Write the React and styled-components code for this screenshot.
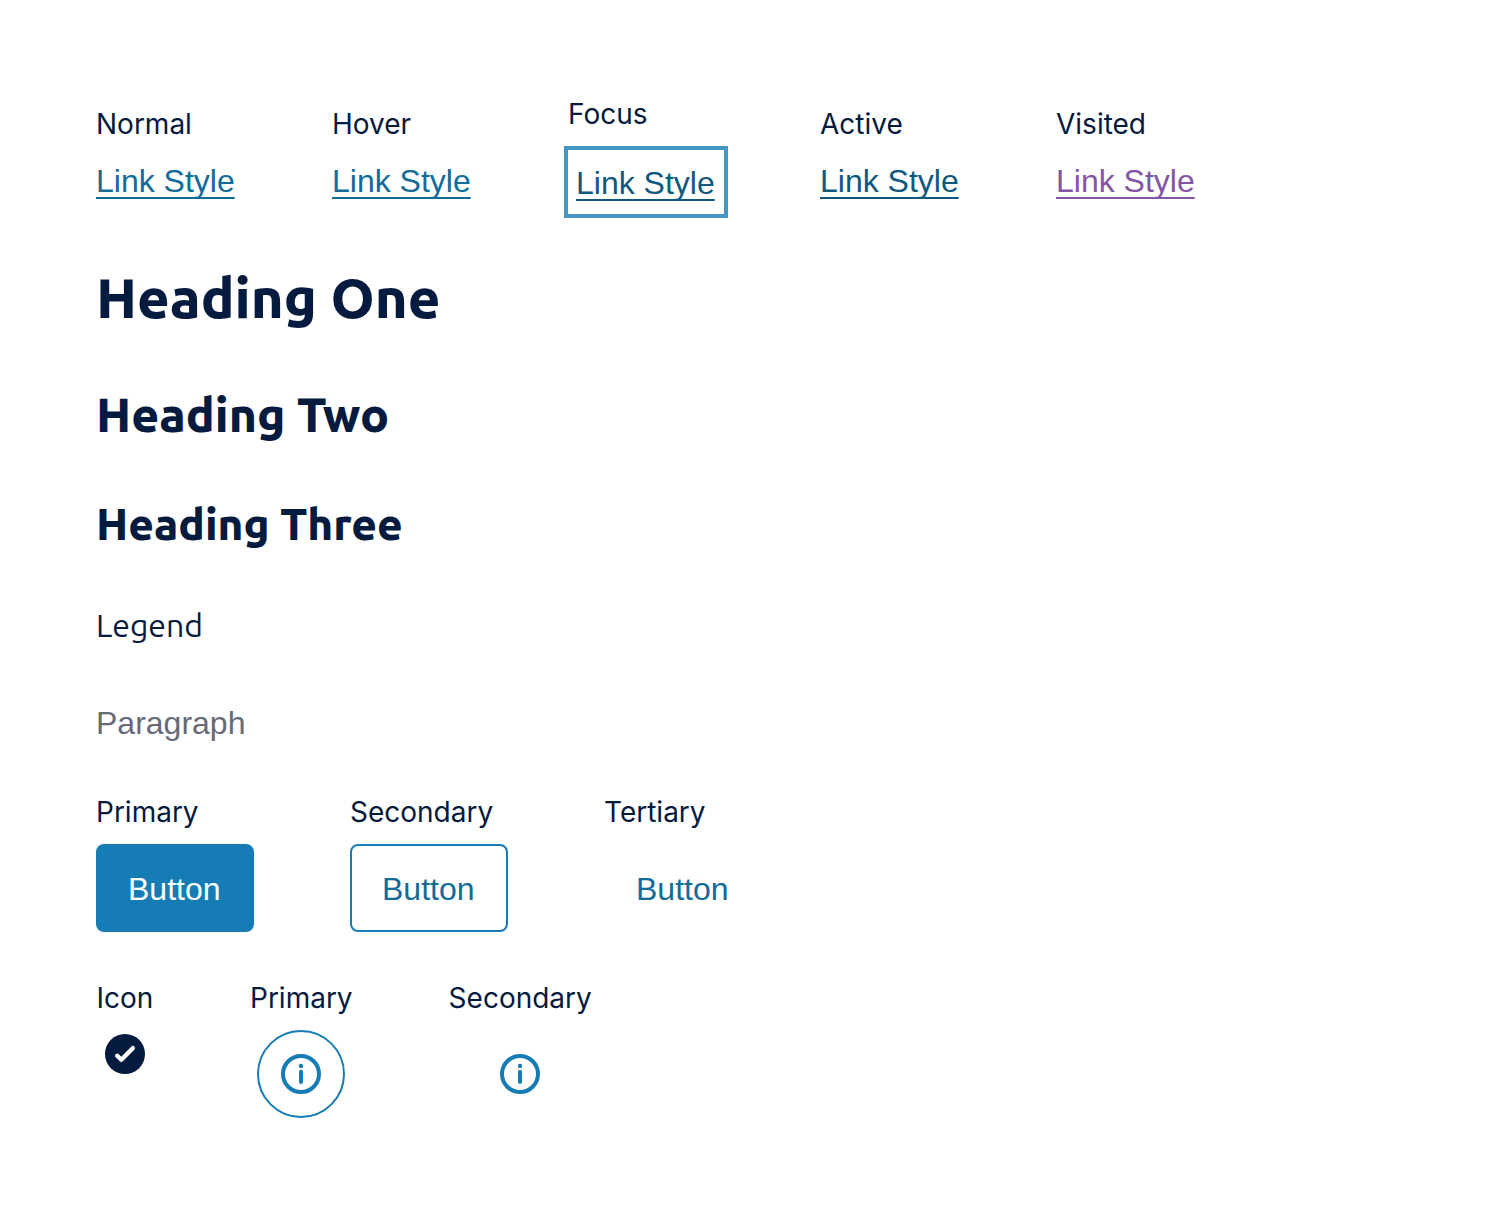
import React from 'react';
import styled, { createGlobalStyle, css } from 'styled-components';

const NAVY = '#041a3e';
const BLUE = '#157cb5';
const LINK_BLUE = '#126b98';

const LINKS = [
  { label: 'Normal', color: LINK_BLUE },
  { label: 'Hover', color: LINK_BLUE },
  { label: 'Focus', color: '#0e587e', focused: true },
  { label: 'Active', color: '#0e587e' },
  { label: 'Visited', color: '#8355a5' },
];

const BUTTONS = [
  { label: 'Primary', variant: 'primary' },
  { label: 'Secondary', variant: 'secondary' },
  { label: 'Tertiary', variant: 'tertiary' },
];

const CheckIcon = () => (
  <svg width="40" height="40" viewBox="0 0 40 40" aria-hidden="true">
    <circle cx="20" cy="20" r="20" fill={NAVY} />
    <path
      d="M12.2 21.8l4.1 4L27.8 14.2"
      fill="none"
      stroke="#fff"
      strokeWidth="4.4"
      strokeLinecap="round"
      strokeLinejoin="round"
    />
  </svg>
);

const InfoIcon = () => (
  <svg width="40" height="40" viewBox="0 0 40 40" aria-hidden="true">
    <circle cx="20" cy="20" r="18" fill="none" stroke={BLUE} strokeWidth="4" />
    <circle cx="20" cy="12" r="2.2" fill={BLUE} />
    <rect x="18" y="15.8" width="4" height="14.2" rx="2" fill={BLUE} />
  </svg>
);

const App = () => {
  return (
    <Page>
      <GlobalStyle />
      <Row $align="center">
        {LINKS.map(({ label, color, focused }) => (
          <Column key={label}>
            <Label id={`link-${label}`}>{label}</Label>
            <Link href="#" $color={color} $focused={focused} aria-describedby={`link-${label}`}>
              Link Style
            </Link>
          </Column>
        ))}
      </Row>
      <HeadingOne>Heading One</HeadingOne>
      <HeadingTwo>Heading Two</HeadingTwo>
      <HeadingThree>Heading Three</HeadingThree>
      <Legend>Legend</Legend>
      <Paragraph>Paragraph</Paragraph>
      <Row>
        {BUTTONS.map(({ label, variant }) => (
          <Column key={label}>
            <Label id={`button-${variant}`}>{label}</Label>
            <Button type="button" $variant={variant} aria-describedby={`button-${variant}`}>
              Button
            </Button>
          </Column>
        ))}
      </Row>
      <Row>
        <Column $centered>
          <Label>Icon</Label>
          <IconBox>
            <CheckIcon />
          </IconBox>
        </Column>
        <Column $centered>
          <Label id="icon-primary">Primary</Label>
          <IconButton type="button" $outlined aria-labelledby="icon-primary">
            <InfoIcon />
          </IconButton>
        </Column>
        <Column $centered>
          <Label id="icon-secondary">Secondary</Label>
          <IconButton type="button" aria-labelledby="icon-secondary">
            <InfoIcon />
          </IconButton>
        </Column>
      </Row>
    </Page>
  );
};

const GlobalStyle = createGlobalStyle`
  * {
    box-sizing: border-box;
  }

  body {
    margin: 0;
    background-color: #fff;
    color: ${NAVY};
  }
`;

const Page = styled.main`
  display: flex;
  flex-direction: column;
  gap: 48px;
  padding: 96px;
`;

const Row = styled.div`
  display: flex;
  align-items: ${({ $align }) => $align || 'flex-start'};
  gap: 96px;
`;

const Column = styled.div`
  display: flex;
  flex-direction: column;
  align-items: ${({ $centered }) => ($centered ? 'center' : 'flex-start')};
  gap: 14px;
`;

const Label = styled.span`
  font-family: Inter, sans-serif;
  font-size: 28px;
  line-height: 36px;
`;

const Link = styled.a`
  min-width: 140px;
  padding-bottom: 2px;
  color: ${({ $color }) => $color};
  font-family: 'Liberation Sans', Arial, sans-serif;
  font-size: 32px;
  line-height: 50px;
  text-decoration-thickness: 2px;
  text-underline-offset: 5px;
  text-decoration-skip-ink: none;

  ${({ $focused }) =>
    $focused &&
    css`
      min-width: 164px;
      margin: 0 -4px;
      padding: 8px 8px 6px;
      border: 4px solid #4597c3;
    `}
`;

const headingFont = css`
  margin: 0;
  font-family: Ubuntu, 'Noto Sans', sans-serif;
  font-weight: 800;
`;

const HeadingOne = styled.h1`
  ${headingFont}
  font-size: 56px;
  line-height: 64px;
`;

const HeadingTwo = styled.h2`
  ${headingFont}
  font-size: 48px;
  line-height: 72px;
`;

const HeadingThree = styled.h3`
  ${headingFont}
  font-size: 44px;
  line-height: 52px;
`;

const Legend = styled.p`
  ${headingFont}
  font-size: 32px;
  font-weight: 450;
  line-height: 54px;
`;

const Paragraph = styled.p`
  margin: 0;
  color: #676b79;
  font-family: 'Liberation Sans', Arial, sans-serif;
  font-size: 32px;
  line-height: 46px;
`;

const Button = styled.button`
  min-width: 158px;
  height: 88px;
  padding: 2px 30px 0;
  border: 2px solid ${({ $variant }) => ($variant === 'tertiary' ? 'transparent' : BLUE)};
  border-radius: 8px;
  background-color: ${({ $variant }) => ($variant === 'primary' ? BLUE : 'transparent')};
  color: ${({ $variant }) => ($variant === 'primary' ? '#fff' : LINK_BLUE)};
  font-family: 'Liberation Sans', Arial, sans-serif;
  font-size: 32px;
  text-align: left;
  cursor: pointer;
`;

const IconBox = styled.div`
  display: flex;
  justify-content: center;
  min-width: 58px;
  padding: 4px;
`;

const IconButton = styled.button`
  display: flex;
  align-items: center;
  justify-content: center;
  width: 88px;
  height: 88px;
  padding: 0;
  border: 2px solid ${({ $outlined }) => ($outlined ? BLUE : 'transparent')};
  border-radius: 50%;
  background: transparent;
  cursor: pointer;
`;

export default App;
